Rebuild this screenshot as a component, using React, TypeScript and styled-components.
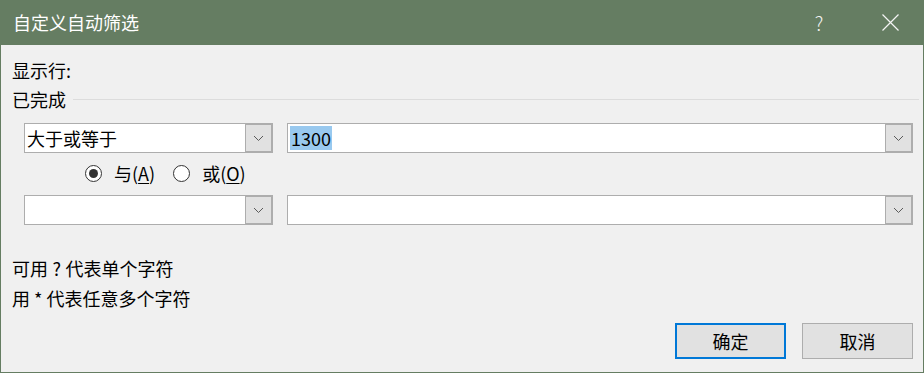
import React from "react";
import styled, { createGlobalStyle } from "styled-components";

const Global = createGlobalStyle`
  html, body { margin: 0; padding: 0; background: #f0f0f0; }
  * { box-sizing: border-box; }
  body { font-family: "Noto Sans CJK SC", "Segoe UI", sans-serif; }
`;

const Window = styled.div`
  width: 924px;
  height: 373px;
  border: 1px solid #657d62;
  display: flex;
  flex-direction: column;
  background: #f0f0f0;
  overflow: hidden;
`;

const TitleBar = styled.div`
  height: 44px;
  flex: none;
  background: #657d62;
  display: flex;
  align-items: center;
  justify-content: space-between;
  color: #ffffff;
`;

const Title = styled.div`
  padding-left: 12px;
  font-size: 18px;
  line-height: 24px;
  margin-top: -2px;
`;

const Controls = styled.div`
  display: flex;
  align-items: center;
  height: 100%;
  gap: 16px;
  padding-right: 1px;
`;

const CaptionButton = styled.div<{ $w: number }>`
  width: ${(p) => p.$w}px;
  height: 100%;
  display: flex;
  align-items: center;
  justify-content: center;
  font-size: 19px;
  font-weight: 300;
  color: #f4f4f4;
  margin-top: -2px;
`;

const Body = styled.div`
  flex: 1;
  display: flex;
  flex-direction: column;
  padding: 0 10px 0 11px;
  font-size: 18px;
  color: #000;
`;

const Label = styled.div<{ $mt: number }>`
  margin-top: ${(p) => p.$mt}px;
  line-height: 20px;
  height: 20px;
  white-space: pre;
`;

const GroupHeader = styled.div`
  margin-top: 9px;
  display: flex;
  align-items: center;
  gap: 7px;
  line-height: 20px;
  height: 20px;
  margin-right: -6px;
`;

const Rule = styled.div`
  flex: 1;
  height: 1px;
  background: #dcdcdc;
  margin-top: 1px;
`;

const ConditionRow = styled.div<{ $mt: number }>`
  margin-top: ${(p) => p.$mt}px;
  margin-left: 12px;
  display: grid;
  grid-template-columns: 249px 1fr;
  gap: 14px;
  height: 30px;
`;

const Combo = styled.div`
  display: flex;
  border: 1px solid #adadad;
  background: #fff;
  height: 30px;
`;

const ComboText = styled.div`
  flex: 1;
  padding-left: 2px;
  display: flex;
  align-items: center;
  line-height: 24px;
  white-space: nowrap;
  overflow: hidden;
`;

const Selected = styled.span`
  background: #99c9ef;
  display: inline-block;
  line-height: 24px;
  height: 24px;
  padding: 0 1px 0 1px;
`;

const DropButton = styled.div`
  width: 28px;
  flex: none;
  border: 1px solid #adadad;
  margin: -1px -1px -1px 0;
  border-width: 2px 2px 2px 1px;
  background: #e1e1e1;
  display: flex;
  align-items: center;
  justify-content: center;
`;

const RadioRow = styled.div`
  margin-top: 10px;
  margin-left: 73px;
  display: flex;
  align-items: center;
  gap: 18px;
  height: 20px;
`;

const RadioItem = styled.label`
  display: flex;
  align-items: center;
  gap: 12px;
  line-height: 20px;
`;

const RadioCircle = styled.span<{ $on?: boolean }>`
  width: 17px;
  height: 17px;
  border-radius: 50%;
  border: 1px solid #333;
  background: #fff;
  display: flex;
  align-items: center;
  justify-content: center;
  &::after {
    content: "";
    width: 9px;
    height: 9px;
    border-radius: 50%;
    background: ${(p) => (p.$on ? "#333" : "transparent")};
  }
`;

const Access = styled.span`
  text-decoration: underline;
  text-underline-offset: 2px;
`;

const Footer = styled.div`
  margin-top: 15px;
  display: flex;
  justify-content: flex-end;
  gap: 16px;
`;

const Button = styled.div<{ $primary?: boolean }>`
  width: 111px;
  height: 36px;
  background: #e1e1e1;
  border: ${(p) => (p.$primary ? "2px solid #0078d7" : "1px solid #adadad")};
  display: flex;
  align-items: center;
  justify-content: center;
  font-size: 18px;
`;

const Chevron = () => (
  <svg width="11" height="7" viewBox="0 0 11 7">
    <path d="M1 1 L5.5 5.5 L10 1" fill="none" stroke="#5a5a5a" strokeWidth="1" />
  </svg>
);

const CloseIcon = () => (
  <svg width="17" height="17" viewBox="0 0 17 17">
    <path d="M0.5 0.5 L16.5 16.5 M16.5 0.5 L0.5 16.5" stroke="#f4f4f4" strokeWidth="1.2" />
  </svg>
);

export default function App() {
  return (
    <>
      <Global />
      <Window>
        <TitleBar>
          <Title>自定义自动筛选</Title>
          <Controls>
            <CaptionButton $w={46}>?</CaptionButton>
            <CaptionButton $w={64}>
              <CloseIcon />
            </CaptionButton>
          </Controls>
        </TitleBar>
        <Body>
          <Label $mt={15}>显示行:</Label>
          <GroupHeader>
            <span>已完成</span>
            <Rule />
          </GroupHeader>
          <ConditionRow $mt={14}>
            <Combo>
              <ComboText>大于或等于</ComboText>
              <DropButton>
                <Chevron />
              </DropButton>
            </Combo>
            <Combo>
              <ComboText>
                <Selected>1300</Selected>
              </ComboText>
              <DropButton>
                <Chevron />
              </DropButton>
            </Combo>
          </ConditionRow>
          <RadioRow>
            <RadioItem>
              <RadioCircle $on />
              <span>
                与(<Access>A</Access>)
              </span>
            </RadioItem>
            <RadioItem>
              <RadioCircle />
              <span>
                或(<Access>O</Access>)
              </span>
            </RadioItem>
          </RadioRow>
          <ConditionRow $mt={12}>
            <Combo>
              <ComboText />
              <DropButton>
                <Chevron />
              </DropButton>
            </Combo>
            <Combo>
              <ComboText />
              <DropButton>
                <Chevron />
              </DropButton>
            </Combo>
          </ConditionRow>
          <Label $mt={33}>{"可用\u2005?\u2005代表单个字符"}</Label>
          <Label $mt={10}>用 * 代表任意多个字符</Label>
          <Footer>
            <Button $primary>确定</Button>
            <Button>取消</Button>
          </Footer>
        </Body>
      </Window>
    </>
  );
}
